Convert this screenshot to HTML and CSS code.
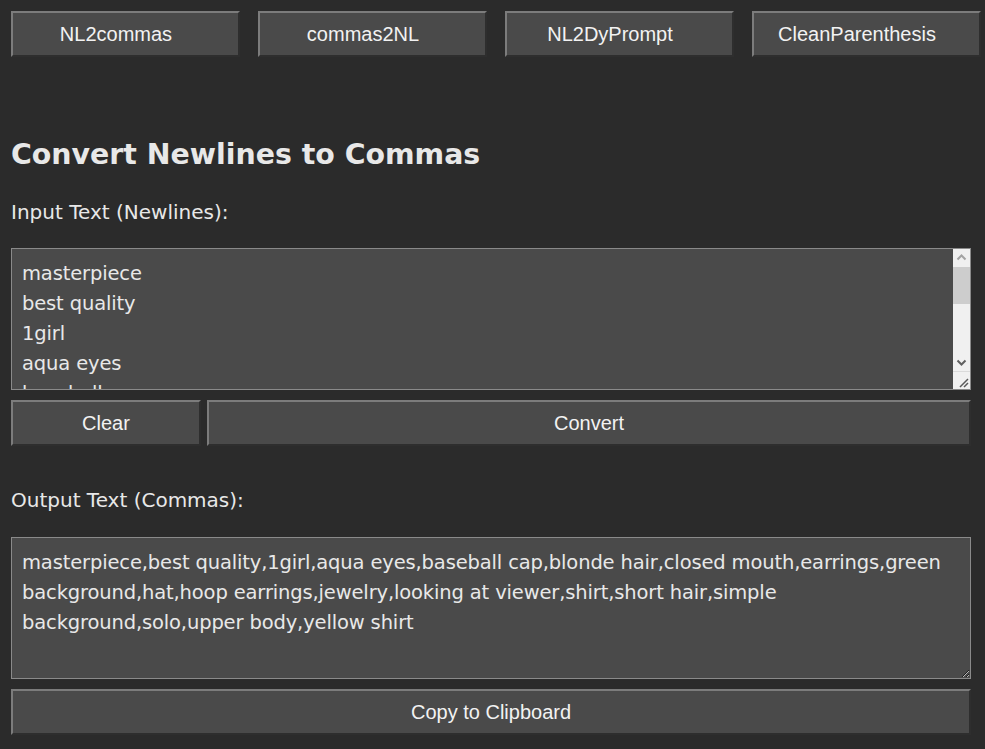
FILE: index.html
```
<!DOCTYPE html>
<html>

<head>
  <meta charset="utf-8">
  <meta name="viewport" content="width=device-width">
  <title>Prompt Tools</title>

  <link rel="stylesheet" href="styles.css">
</head>

<body>
  <div class="tabs">
    <button class="tab-btn">NL2commas</button>
    <button class="tab-btn">commas2NL</button>
    <button class="tab-btn">NL2DyPrompt</button>
    <button class="tab-btn">CleanParenthesis</button>
  </div>

  <div class="panel">
    <h1 class="title">Convert Newlines to Commas</h1>

    <label class="field-label" for="input-text">Input Text (Newlines):</label>
    <div class="input-wrap">
      <textarea class="text-box" id="input-text">masterpiece
best quality
1girl
aqua eyes
baseball cap
blonde hair
closed mouth
earrings
green background
hat
hoop earrings
jewelry
looking at viewer
shirt
short hair
simple background
solo
upper body
yellow shirt</textarea>
      <!-- drawn scrollbar, the real one is hidden in screenshots -->
      <div class="scrollbar" aria-hidden="true">
        <span class="sb-btn">
          <svg width="17" height="17" viewBox="0 0 17 17"><path d="M4.5 10.5l4-4 4 4" fill="none" stroke="#a3a3a3" stroke-width="2"/></svg>
        </span>
        <span class="sb-track"><span class="sb-thumb"></span></span>
        <span class="sb-btn">
          <svg width="17" height="17" viewBox="0 0 17 17"><path d="M4.5 6.5l4 4 4-4" fill="none" stroke="#606060" stroke-width="2"/></svg>
        </span>
        <span class="sb-corner">
          <svg width="17" height="17" viewBox="0 0 17 17"><path d="M7 15l8-8M11 15l4-4" fill="none" stroke="#5a5a5a" stroke-width="1.5"/></svg>
        </span>
      </div>
    </div>

    <div class="actions">
      <button class="btn btn-clear">Clear</button>
      <button class="btn btn-convert">Convert</button>
    </div>

    <label class="field-label output-label" for="output-text">Output Text (Commas):</label>
    <textarea class="text-box" id="output-text">masterpiece,best quality,1girl,aqua eyes,baseball cap,blonde hair,closed mouth,earrings,green background,hat,hoop earrings,jewelry,looking at viewer,shirt,short hair,simple background,solo,upper body,yellow shirt</textarea>

    <button class="btn btn-copy">Copy to Clipboard</button>
  </div>
</body>

</html>
```

FILE: styles.css
```
html,
body {
  margin: 0;
  padding: 0;
  width: 100%;
  height: 100%;
  overflow: hidden;
}

body {
  background-color: #2b2b2b;
  color: #e8e8e8;
  font-family: "DejaVu Sans", sans-serif;
  padding: 11px;
  box-sizing: border-box;
}

button {
  font-family: "Liberation Sans", Arial, sans-serif;
  font-size: 20px;
  color: #f2f2f2;
  background-color: #4a4a4a;
  border: 2px solid;
  border-color: #7c7c7c #2e2e2e #2e2e2e #7c7c7c;
  height: 46px;
  padding: 0;
  cursor: pointer;
}

.tabs {
  display: flex;
  gap: 18px;
}

.tab-btn {
  flex: none;
  width: 229px;
  padding-right: 19px;
}

.panel {
  width: 960px;
  display: flex;
  flex-direction: column;
}

.title {
  font-size: 28.4px;
  font-weight: bold;
  line-height: 34px;
  margin: 81px 0 28px;
}

.field-label {
  font-size: 20px;
  line-height: 24px;
  margin-bottom: 24px;
}

.output-label {
  margin-top: 42px;
  margin-bottom: 25px;
}

.text-box {
  box-sizing: border-box;
  display: block;
  width: 960px;
  height: 142px;
  margin: 0;
  padding: 10px 10px 8px;
  background-color: #4a4a4a;
  color: #e8e8e8;
  border: 1px solid #8a8a8a;
  font-family: "DejaVu Sans", sans-serif;
  font-size: 19.5px;
  letter-spacing: -0.14px;
  line-height: 30px;
}

.input-wrap {
  position: relative;
}

#input-text {
  overflow: hidden;
  resize: none;
  padding-right: 27px;
}

.scrollbar {
  position: absolute;
  top: 1px;
  right: 1px;
  bottom: 1px;
  width: 17px;
  display: flex;
  flex-direction: column;
  background-color: #f0f0f0;
}

.sb-btn {
  height: 17px;
  flex: none;
}

.sb-btn svg,
.sb-corner svg {
  display: block;
}

.sb-track {
  flex: 1;
  padding-top: 1px;
}

.sb-thumb {
  display: block;
  height: 37px;
  background-color: #cdcdcd;
}

.sb-corner {
  height: 17px;
  flex: none;
  border-top: 1px solid #dadada;
}

.actions {
  display: flex;
  gap: 6px;
  margin-top: 10px;
}

.btn-clear {
  width: 190px;
}

.btn-convert {
  flex: 1;
}

.btn-copy {
  width: 960px;
  margin-top: 10px;
}
```
